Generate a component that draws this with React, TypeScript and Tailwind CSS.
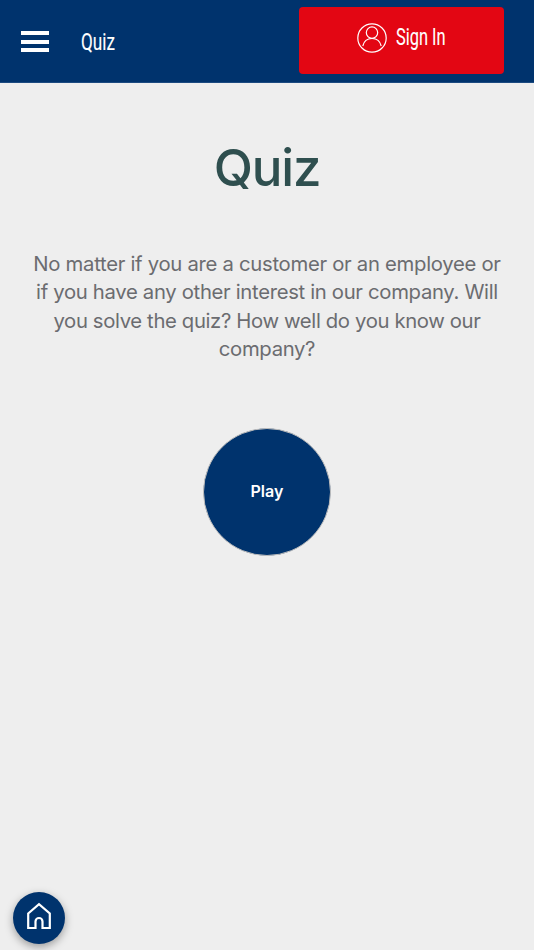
const lines = [
  { text: "No matter if you are a customer or an employee or", tracking: "tracking-[-0.29px]" },
  { text: "if you have any other interest in our company. Will", tracking: "tracking-[-0.32px]" },
  { text: "you solve the quiz? How well do you know our", tracking: "tracking-[-0.36px]" },
  { text: "company?", tracking: "tracking-[-0.33px]" },
];

export default function App() {
  return (
    <div className="relative flex h-[950px] w-[534px] flex-col overflow-hidden bg-[#eeeeee] font-['Inter',sans-serif]">
      <header className="flex h-[83px] shrink-0 items-start border-b border-[#1c4a80] bg-[#00336d] font-['Roboto',sans-serif] text-white">
        <button aria-label="Menu" className="mt-[31px] ml-[21px] flex w-7 flex-col gap-[4.5px]">
          <span className="h-[4px] w-full bg-white" />
          <span className="h-[4px] w-full bg-white" />
          <span className="h-[4px] w-full bg-white" />
        </button>
        <div className="mt-[26px] ml-8 w-[218px]">
          <span className="inline-block origin-left scale-x-[0.7] text-[24.5px] leading-8 [-webkit-text-stroke:0.1px_white]">Quiz</span>
        </div>
        <button className="mt-[7px] flex h-[67px] w-[205px] items-start rounded-[4px] bg-[#e30613] pl-[58px]">
          <svg className="mt-4 h-[30px] w-[30px] shrink-0" viewBox="0 0 30 30" fill="none" stroke="white" strokeWidth="1.2">
            <circle cx="15" cy="15" r="14.2" />
            <circle cx="15" cy="9.6" r="5.7" />
            <path d="M5.800 23c1-4.500 4.500-7.500 9.200-7.500s8.200 3 9.200 7.500" />
          </svg>
          <span className="mt-[14px] ml-[9px] inline-block origin-left scale-x-[0.67] text-[24.5px] leading-8 whitespace-nowrap [-webkit-text-stroke:0.1px_white]">Sign In</span>
        </button>
      </header>
      <main className="flex flex-col items-center text-center">
        <h1 className="mt-[53px] text-[51px] leading-[64px] font-medium tracking-[-1.2px] text-[#2f4f4f]">Quiz</h1>
        <p className="mt-[50px] text-[20.3px] leading-[28.4px] whitespace-nowrap text-[#6b6c70]">
          {lines.map(({ text, tracking }) => (
            <span key={text} className={`block ${tracking}`}>{text}</span>
          ))}
        </p>
        <button className="mt-[64px] flex h-32 w-32 items-center justify-center rounded-full border border-[#bcbcbc] bg-[#00336d] pb-[2px] text-[16px] font-semibold tracking-[0.1px] text-white">
          Play
        </button>
      </main>
      <button aria-label="Home" className="absolute top-[892px] left-[13px] flex h-[52px] w-[52px] items-center justify-center rounded-full bg-[#00336d] shadow-[0_3px_8px_rgba(0,0,0,0.35)]">
        <svg className="-mt-[5px] h-[28px] w-[26px]" viewBox="0 0 26 28" fill="none" stroke="white" strokeWidth="2.2">
          <path d="M2.200 11.500 13 2.200l10.800 9.300V26H16.500v-6.500a3.500 3.500 0 0 0-7 0V26H2.200z" />
        </svg>
      </button>
    </div>
  );
}
